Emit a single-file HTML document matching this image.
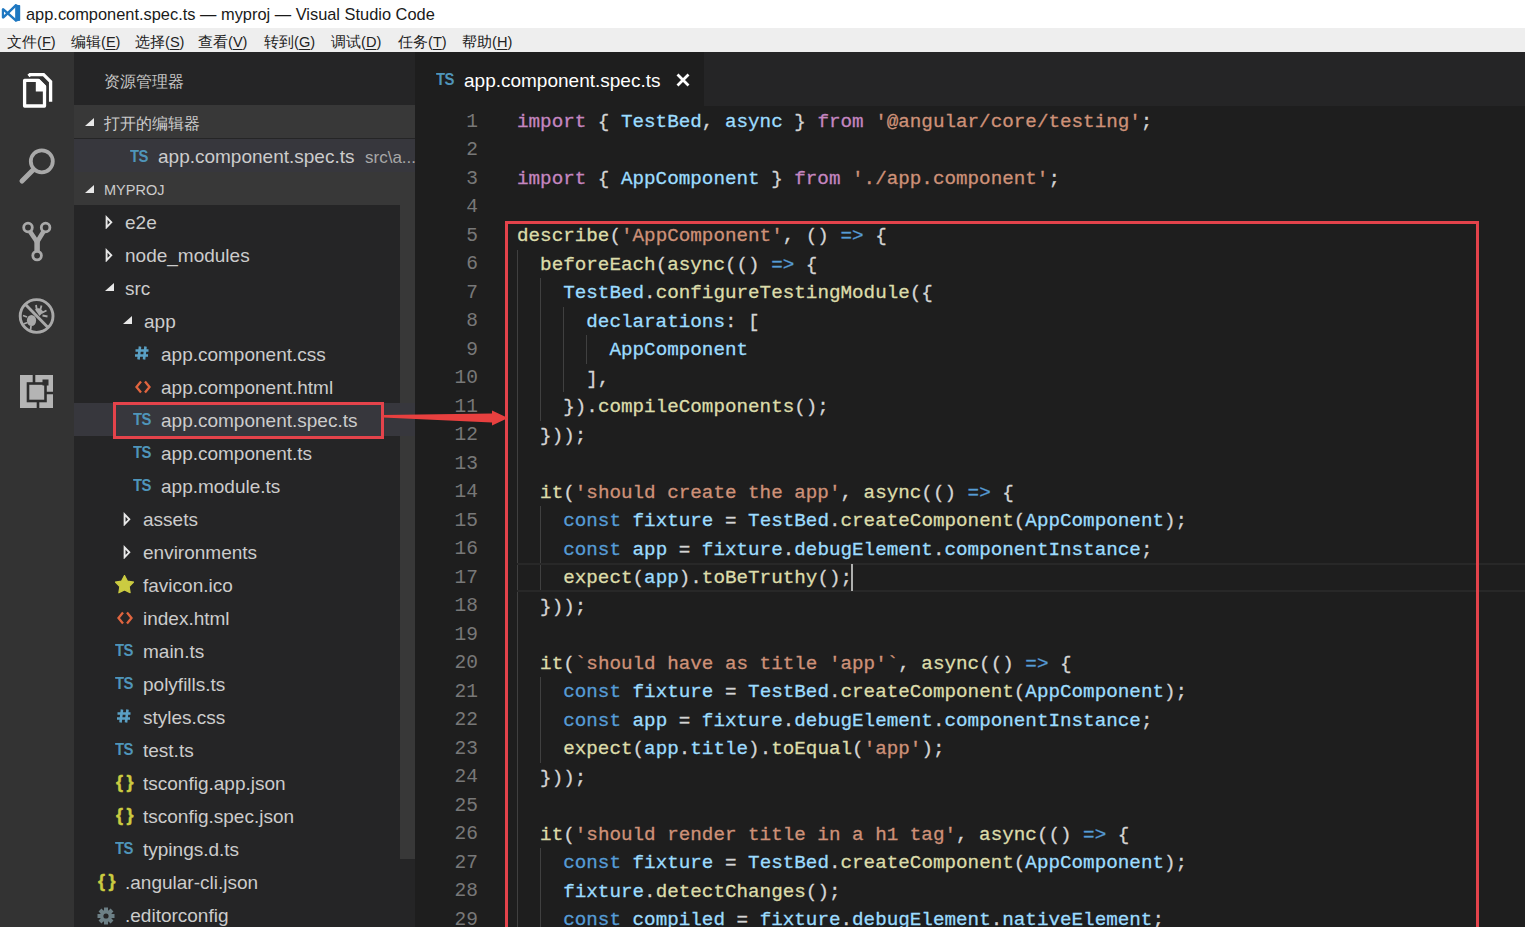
<!DOCTYPE html>
<html><head><meta charset="utf-8">
<style>
*{margin:0;padding:0;box-sizing:border-box}
html,body{width:1525px;height:927px;overflow:hidden;background:#1e1e1e;font-family:"Liberation Sans",sans-serif}
.a{position:absolute}
#title{left:0;top:0;width:1525px;height:28px;background:#fff}
#title .t{left:26px;top:3px;font-size:16.4px;color:#1a1a1a;white-space:nowrap;line-height:22px}
#menu{left:0;top:28px;width:1525px;height:24px;background:#eeeeee}
#menu span{position:absolute;top:0.5px;font-size:14.6px;line-height:26px;color:#222;white-space:nowrap}
#menu u{text-decoration:underline;text-underline-offset:2px}
#act{left:0;top:52px;width:74px;height:875px;background:#333333}
#side{left:74px;top:52px;width:341px;height:875px;background:#252526}
#tabs{left:415px;top:52px;width:1110px;height:54px;background:#252526}
#tab{left:415px;top:52px;width:289px;height:54px;background:#1e1e1e}
#editor{left:415px;top:106px;width:1110px;height:821px;background:#1e1e1e}
.lbl{font-size:19px;line-height:33px;height:33px;color:#cccccc;white-space:nowrap}
.ts{font-weight:bold;color:#4f95ba;font-size:16.5px;line-height:33px;letter-spacing:-0.5px;transform:scaleX(0.9);transform-origin:0 0}
.hash{font-weight:bold;color:#519aba;font-size:19px;line-height:33px}
.brace{font-weight:bold;color:#cbcb41;font-size:18px;line-height:33px;letter-spacing:3.5px;-webkit-text-stroke:0.4px #cbcb41}
.sh{left:74px;width:341px;height:33px;background:#383838;font-size:16.1px;line-height:33px;color:#cccccc}
.ln{position:absolute;left:415px;width:63px;text-align:right;font-family:"Liberation Mono",monospace;font-size:19.5px;line-height:28.5px;height:28.5px;color:#787878}
.cl{position:absolute;left:517px;-webkit-text-stroke:0.3px currentColor;font-family:"Liberation Mono",monospace;font-size:19.25px;line-height:28.5px;height:28.5px;color:#d4d4d4;white-space:pre}
.cl span{-webkit-text-stroke:0.3px currentColor}
.k{color:#c586c0}.v{color:#9cdcfe}.s{color:#ce9178}.f{color:#dcdcaa}.b{color:#569cd6}
.g{position:absolute;width:1px;background:#404040}
.red{position:absolute;border:3px solid #e4434b}
</style></head><body>
<div id="title" class="a">
  <svg class="a" style="left:0;top:0" width="24" height="27" viewBox="0 0 24 27"><g fill="none" stroke="#1f78c1" stroke-linecap="round"><path d="M17.7 5.2 V20.6" stroke-width="4.6" stroke-linecap="butt"/><path d="M15.8 5.4 L3.6 17.2" stroke-width="2.5"/><path d="M3.6 9.6 L15.8 20.4" stroke-width="2.5"/><path d="M2.9 9.4 V17.4" stroke-width="2.2"/></g><path d="M15.4 4.2 L20.2 5.4 V20.4 L15.4 21.8 Z" fill="#1f78c1"/></svg>
  <div class="a t">app.component.spec.ts — myproj — Visual Studio Code</div>
</div>
<div id="menu" class="a">
  <span style="left:7px">文件(<u>F</u>)</span>
  <span style="left:71px">编辑(<u>E</u>)</span>
  <span style="left:135px">选择(<u>S</u>)</span>
  <span style="left:198px">查看(<u>V</u>)</span>
  <span style="left:264px">转到(<u>G</u>)</span>
  <span style="left:331px">调试(<u>D</u>)</span>
  <span style="left:398px">任务(<u>T</u>)</span>
  <span style="left:462px">帮助(<u>H</u>)</span>
</div>
<div id="act" class="a"></div>
<div id="side" class="a"></div>
<div id="tabs" class="a"></div>
<div id="tab" class="a"></div>
<div id="editor" class="a"></div>
<svg class="a" style="left:0;top:53px" width="74" height="380" viewBox="0 53 74 380">
 <g fill="none" stroke="#ffffff" stroke-width="3.3" stroke-linejoin="round">
  <path d="M24.6 80.4 H38.5 L44.5 86.4 V106 H24.6 Z"/>
  <path d="M28.5 76 L30 74.7 H43.6 L50.6 81.7 V101.7" stroke-linejoin="miter"/>
 </g>
 <path d="M35.8 79 H39 L46.1 86.1 V91.4 H35.8 Z" fill="#ffffff"/>
 <g fill="none" stroke="#a9a9a9" stroke-width="3.8">
  <circle cx="41.8" cy="161.3" r="11"/>
  <path d="M33.5 169.5 L22 181" stroke-width="5" stroke-linecap="round"/>
 </g>
 <g fill="none" stroke="#a9a9a9" stroke-width="2.8">
  <circle cx="28" cy="227.5" r="4.3"/>
  <circle cx="45.6" cy="227.5" r="4.3"/>
  <circle cx="37.1" cy="255.6" r="4.3"/>
  <path d="M30 231.5 L37.1 242 L43.5 231.5" stroke-width="4.6" stroke-linejoin="round"/>
  <path d="M37.1 241 V251" stroke-width="5.5"/>
 </g>
 <g fill="none" stroke="#a9a9a9" stroke-width="2.9">
  <circle cx="36.6" cy="316" r="16.4"/>
  <path d="M25.5 304.5 L48 327.5"/>
 </g>
 <g fill="#a9a9a9">
  <ellipse cx="31.5" cy="320.5" rx="4.6" ry="5.6"/>
 </g>
 <g stroke="#a9a9a9" stroke-width="1.8" fill="none">
  <path d="M27 317 L23 315.5 M27.5 322.5 L23.5 324 M31 326 L30.5 330 M36 305 L37 311 M41.5 305.5 L40 311 M46.5 310.5 L41.5 313 M47.5 316.5 L42.5 315.5"/>
 </g>
 <path d="M35 309.5 Q39.5 306 43.5 312 L39.5 316 Z" fill="#a9a9a9"/>
 <path d="M20 375 H53 V408 H20 Z" fill="#b4b4b4"/>
 <g fill="none" stroke="#2d2d2d" stroke-width="2.6">
  <rect x="28" y="383.5" width="17.5" height="17.5" fill="#b4b4b4"/>
  <path d="M38 401 V408 M45.5 393 H53 M34 375 V383.5"/>
 </g>
 <rect x="42.5" y="379.5" width="6" height="6" fill="#2d2d2d"/>
</svg>
<div class="a" style="left:104px;top:53px;height:53px;line-height:56px;font-size:16.25px;color:#c5c5c5">资源管理器</div>
<div class="a sh" style="top:105px"><svg class="a" style="left:11px;top:12px" width="10" height="10" viewBox="0 0 10 10"><path d="M9 1 V9 H0 Z" fill="#e8e8e8"/></svg><span class="a" style="left:30px;top:2px">打开的编辑器</span></div>
<div class="a" style="left:74px;top:139px;width:341px;height:33px;background:#37373d"></div>
<div class="a ts" style="left:130px;top:140px">TS</div>
<div class="a lbl" style="left:158px;top:140px">app.component.spec.ts</div>
<div class="a" style="left:365px;top:140.5px;font-size:17px;line-height:33px;color:#a8a8a8;white-space:nowrap">src\a...</div>
<div class="a sh" style="top:172px"><svg class="a" style="left:11px;top:12px" width="10" height="10" viewBox="0 0 10 10"><path d="M9 1 V9 H0 Z" fill="#e8e8e8"/></svg><span class="a" style="left:30px;top:1.5px;font-size:14.5px">MYPROJ</span></div>
<div class="a" style="left:400px;top:205px;width:15px;height:654px;background:#383838"></div>
<svg class="a" style="left:105px;top:215px" width="8" height="14" viewBox="0 0 8 14"><path d="M1.6 2.4 L6.3 7.3 L1.6 12.2 Z" fill="none" stroke="#e8e8e8" stroke-width="1.9" stroke-linejoin="miter"/></svg>
<div class="a lbl" style="left:125px;top:206px">e2e</div>
<svg class="a" style="left:105px;top:248px" width="8" height="14" viewBox="0 0 8 14"><path d="M1.6 2.4 L6.3 7.3 L1.6 12.2 Z" fill="none" stroke="#e8e8e8" stroke-width="1.9" stroke-linejoin="miter"/></svg>
<div class="a lbl" style="left:125px;top:239px">node_modules</div>
<svg class="a" style="left:105px;top:282px" width="10" height="10" viewBox="0 0 10 10"><path d="M9 1 V9 H0 Z" fill="#e8e8e8"/></svg>
<div class="a lbl" style="left:125px;top:272px">src</div>
<svg class="a" style="left:123px;top:315px" width="10" height="10" viewBox="0 0 10 10"><path d="M9 1 V9 H0 Z" fill="#e8e8e8"/></svg>
<div class="a lbl" style="left:144px;top:305px">app</div>
<svg class="a" style="left:135px;top:346px" width="14" height="14" viewBox="0 0 14 14"><path d="M5 0.5 L3.5 13.5 M10.5 0.5 L9 13.5 M0.5 4.5 H13.5 M0 9.5 H13" stroke="#5aa0c4" stroke-width="2.6" fill="none"/></svg>
<div class="a lbl" style="left:161px;top:338px">app.component.css</div>
<svg class="a" style="left:135px;top:380px" width="16" height="14" viewBox="0 0 16 14"><path d="M6 1.5 L1.5 7 L6 12.5 M10 1.5 L14.5 7 L10 12.5" fill="none" stroke="#e0653f" stroke-width="2.3"/></svg>
<div class="a lbl" style="left:161px;top:371px">app.component.html</div>
<div class="a" style="left:74px;top:403px;width:341px;height:33px;background:#37373d"></div>
<div class="a ts" style="left:133px;top:403px">TS</div>
<div class="a lbl" style="left:161px;top:404px">app.component.spec.ts</div>
<div class="a ts" style="left:133px;top:436px">TS</div>
<div class="a lbl" style="left:161px;top:437px">app.component.ts</div>
<div class="a ts" style="left:133px;top:469px">TS</div>
<div class="a lbl" style="left:161px;top:470px">app.module.ts</div>
<svg class="a" style="left:123px;top:512px" width="8" height="14" viewBox="0 0 8 14"><path d="M1.6 2.4 L6.3 7.3 L1.6 12.2 Z" fill="none" stroke="#e8e8e8" stroke-width="1.9" stroke-linejoin="miter"/></svg>
<div class="a lbl" style="left:143px;top:503px">assets</div>
<svg class="a" style="left:123px;top:545px" width="8" height="14" viewBox="0 0 8 14"><path d="M1.6 2.4 L6.3 7.3 L1.6 12.2 Z" fill="none" stroke="#e8e8e8" stroke-width="1.9" stroke-linejoin="miter"/></svg>
<div class="a lbl" style="left:143px;top:536px">environments</div>
<svg class="a" style="left:115px;top:574.5px" width="19" height="19" viewBox="0 0 19 19"><path d="M9.50 0.40 L12.38 6.04 L18.63 7.03 L14.16 11.51 L15.14 17.77 L9.50 14.90 L3.86 17.77 L4.84 11.51 L0.37 7.03 L6.62 6.04 Z" fill="#cbcb41" stroke="#cbcb41" stroke-width="1.2" stroke-linejoin="round"/></svg>
<div class="a lbl" style="left:143px;top:569px">favicon.ico</div>
<svg class="a" style="left:117px;top:611px" width="16" height="14" viewBox="0 0 16 14"><path d="M6 1.5 L1.5 7 L6 12.5 M10 1.5 L14.5 7 L10 12.5" fill="none" stroke="#e0653f" stroke-width="2.3"/></svg>
<div class="a lbl" style="left:143px;top:602px">index.html</div>
<div class="a ts" style="left:115px;top:634px">TS</div>
<div class="a lbl" style="left:143px;top:635px">main.ts</div>
<div class="a ts" style="left:115px;top:667px">TS</div>
<div class="a lbl" style="left:143px;top:668px">polyfills.ts</div>
<svg class="a" style="left:117px;top:709px" width="14" height="14" viewBox="0 0 14 14"><path d="M5 0.5 L3.5 13.5 M10.5 0.5 L9 13.5 M0.5 4.5 H13.5 M0 9.5 H13" stroke="#5aa0c4" stroke-width="2.6" fill="none"/></svg>
<div class="a lbl" style="left:143px;top:701px">styles.css</div>
<div class="a ts" style="left:115px;top:733px">TS</div>
<div class="a lbl" style="left:143px;top:734px">test.ts</div>
<div class="a brace" style="left:116px;top:766px">{}</div>
<div class="a lbl" style="left:143px;top:767px">tsconfig.app.json</div>
<div class="a brace" style="left:116px;top:799px">{}</div>
<div class="a lbl" style="left:143px;top:800px">tsconfig.spec.json</div>
<div class="a ts" style="left:115px;top:832px">TS</div>
<div class="a lbl" style="left:143px;top:833px">typings.d.ts</div>
<div class="a brace" style="left:98px;top:865px">{}</div>
<div class="a lbl" style="left:125px;top:866px">.angular-cli.json</div>
<svg class="a" style="left:97px;top:906.5px" width="18" height="18" viewBox="0 0 18 18"><g fill="#6d8086"><circle cx="9" cy="9" r="6"/><rect x="7" y="0.5" width="4" height="17"/><rect x="0.5" y="7" width="17" height="4"/><rect x="7" y="0.5" width="4" height="17" transform="rotate(45 9 9)"/><rect x="7" y="0.5" width="4" height="17" transform="rotate(-45 9 9)"/></g><circle cx="9" cy="9" r="2.6" fill="#252526"/></svg>
<div class="a lbl" style="left:125px;top:899px">.editorconfig</div><div class="a ts" style="left:436px;top:63px">TS</div>
<div class="a" style="left:464px;top:64px;font-size:19px;line-height:33px;color:#ffffff;white-space:nowrap">app.component.spec.ts</div>
<svg class="a" style="left:676px;top:73px" width="14" height="14" viewBox="0 0 14 14"><path d="M1.5 1.5 L12.5 12.5 M12.5 1.5 L1.5 12.5" stroke="#ffffff" stroke-width="2.8"/></svg>
<div class="g" style="left:517.0px;top:249.5px;height:684.0px"></div>
<div class="g" style="left:540.1px;top:278.0px;height:142.5px"></div>
<div class="g" style="left:540.1px;top:506.0px;height:85.5px"></div>
<div class="g" style="left:540.1px;top:677.0px;height:85.5px"></div>
<div class="g" style="left:540.1px;top:848.0px;height:85.5px"></div>
<div class="g" style="left:563.2px;top:306.5px;height:85.5px"></div>
<div class="g" style="left:586.3px;top:335.0px;height:28.5px"></div><div class="ln" style="top:107.5px">1</div>
<div class="cl" style="top:108.0px"><span class="k">import</span> { <span class="v">TestBed</span>, <span class="v">async</span> } <span class="k">from</span> <span class="s">&#x27;@angular/core/testing&#x27;</span>;</div>
<div class="ln" style="top:136.0px">2</div>
<div class="ln" style="top:164.5px">3</div>
<div class="cl" style="top:165.0px"><span class="k">import</span> { <span class="v">AppComponent</span> } <span class="k">from</span> <span class="s">&#x27;./app.component&#x27;</span>;</div>
<div class="ln" style="top:193.0px">4</div>
<div class="ln" style="top:221.5px">5</div>
<div class="cl" style="top:222.0px"><span class="f">describe</span>(<span class="s">&#x27;AppComponent&#x27;</span>, () <span class="b">=&gt;</span> {</div>
<div class="ln" style="top:250.0px">6</div>
<div class="cl" style="top:250.5px">  <span class="f">beforeEach</span>(<span class="f">async</span>(() <span class="b">=&gt;</span> {</div>
<div class="ln" style="top:278.5px">7</div>
<div class="cl" style="top:279.0px">    <span class="v">TestBed</span>.<span class="f">configureTestingModule</span>({</div>
<div class="ln" style="top:307.0px">8</div>
<div class="cl" style="top:307.5px">      <span class="v">declarations</span>: [</div>
<div class="ln" style="top:335.5px">9</div>
<div class="cl" style="top:336.0px">        <span class="v">AppComponent</span></div>
<div class="ln" style="top:364.0px">10</div>
<div class="cl" style="top:364.5px">      ],</div>
<div class="ln" style="top:392.5px">11</div>
<div class="cl" style="top:393.0px">    }).<span class="f">compileComponents</span>();</div>
<div class="ln" style="top:421.0px">12</div>
<div class="cl" style="top:421.5px">  }));</div>
<div class="ln" style="top:449.5px">13</div>
<div class="ln" style="top:478.0px">14</div>
<div class="cl" style="top:478.5px">  <span class="f">it</span>(<span class="s">&#x27;should create the app&#x27;</span>, <span class="f">async</span>(() <span class="b">=&gt;</span> {</div>
<div class="ln" style="top:506.5px">15</div>
<div class="cl" style="top:507.0px">    <span class="b">const</span> <span class="v">fixture</span> = <span class="v">TestBed</span>.<span class="f">createComponent</span>(<span class="v">AppComponent</span>);</div>
<div class="ln" style="top:535.0px">16</div>
<div class="cl" style="top:535.5px">    <span class="b">const</span> <span class="v">app</span> = <span class="v">fixture</span>.<span class="v">debugElement</span>.<span class="v">componentInstance</span>;</div>
<div class="ln" style="top:563.5px">17</div>
<div class="cl" style="top:564.0px">    <span class="f">expect</span>(<span class="v">app</span>).<span class="f">toBeTruthy</span>();</div>
<div class="ln" style="top:592.0px">18</div>
<div class="cl" style="top:592.5px">  }));</div>
<div class="ln" style="top:620.5px">19</div>
<div class="ln" style="top:649.0px">20</div>
<div class="cl" style="top:649.5px">  <span class="f">it</span>(<span class="s">`should have as title &#x27;app&#x27;`</span>, <span class="f">async</span>(() <span class="b">=&gt;</span> {</div>
<div class="ln" style="top:677.5px">21</div>
<div class="cl" style="top:678.0px">    <span class="b">const</span> <span class="v">fixture</span> = <span class="v">TestBed</span>.<span class="f">createComponent</span>(<span class="v">AppComponent</span>);</div>
<div class="ln" style="top:706.0px">22</div>
<div class="cl" style="top:706.5px">    <span class="b">const</span> <span class="v">app</span> = <span class="v">fixture</span>.<span class="v">debugElement</span>.<span class="v">componentInstance</span>;</div>
<div class="ln" style="top:734.5px">23</div>
<div class="cl" style="top:735.0px">    <span class="f">expect</span>(<span class="v">app</span>.<span class="v">title</span>).<span class="f">toEqual</span>(<span class="s">&#x27;app&#x27;</span>);</div>
<div class="ln" style="top:763.0px">24</div>
<div class="cl" style="top:763.5px">  }));</div>
<div class="ln" style="top:791.5px">25</div>
<div class="ln" style="top:820.0px">26</div>
<div class="cl" style="top:820.5px">  <span class="f">it</span>(<span class="s">&#x27;should render title in a h1 tag&#x27;</span>, <span class="f">async</span>(() <span class="b">=&gt;</span> {</div>
<div class="ln" style="top:848.5px">27</div>
<div class="cl" style="top:849.0px">    <span class="b">const</span> <span class="v">fixture</span> = <span class="v">TestBed</span>.<span class="f">createComponent</span>(<span class="v">AppComponent</span>);</div>
<div class="ln" style="top:877.0px">28</div>
<div class="cl" style="top:877.5px">    <span class="v">fixture</span>.<span class="f">detectChanges</span>();</div>
<div class="ln" style="top:905.5px">29</div>
<div class="cl" style="top:906.0px">    <span class="b">const</span> <span class="v">compiled</span> = <span class="v">fixture</span>.<span class="v">debugElement</span>.<span class="v">nativeElement</span>;</div><div class="a" style="left:517px;top:563px;width:1008px;height:28.5px;border-top:2px solid #282828;border-bottom:2px solid #282828"></div>
<div class="a" style="left:851px;top:564px;width:2px;height:27px;background:#aeafad"></div>
<div class="red" style="left:113px;top:402px;width:271px;height:37px"></div>
<div class="red" style="left:505px;top:221px;width:974px;height:720px"></div>
<svg class="a" style="left:380px;top:400px" width="135" height="35" viewBox="380 400 135 35"><path d="M383 415 L492 413.5 L492 410.5 L508 418 L492 425.5 L492 422.5 L383 417.5 Z" fill="#e8403f"/></svg>
</body></html>
